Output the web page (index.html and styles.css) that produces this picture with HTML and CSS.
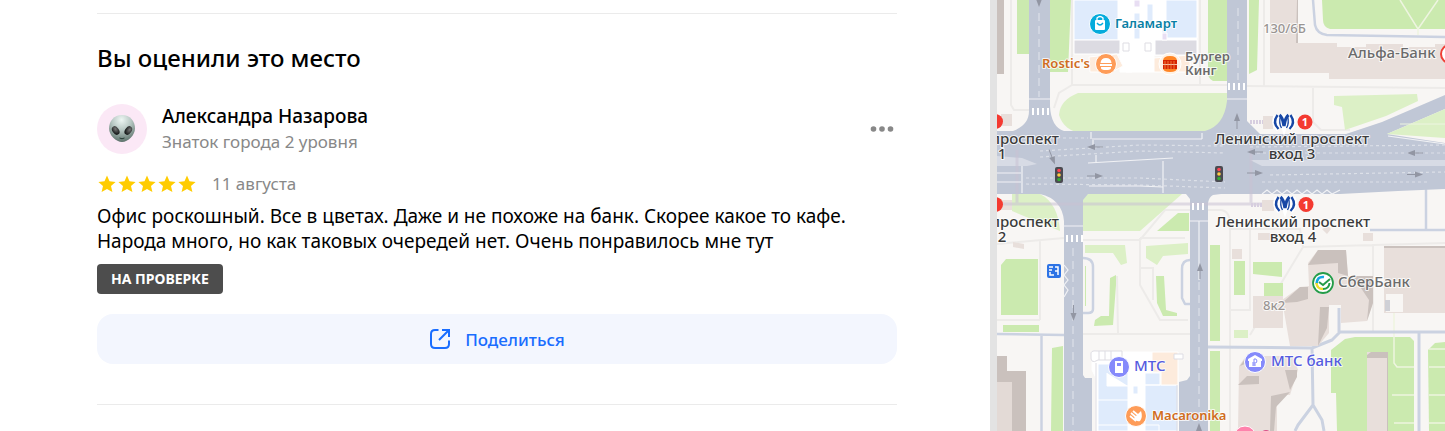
FILE: index.html
```html
<!DOCTYPE html>
<html lang="ru">
<head>
<meta charset="utf-8">
<title>Отзыв</title>
<link rel="stylesheet" href="styles.css">
</head>
<body>
<div class="page">
<main class="panel">
  <section class="review-block">
    <h2 class="title">Вы оценили это место</h2>
    <article class="review">
      <header class="author">
        <svg class="avatar" viewBox="0 0 50 50" aria-hidden="true">
          <defs>
            <radialGradient id="skin" cx=".48" cy=".18" r=".9"><stop offset="0" stop-color="#eef7f4"/><stop offset=".4" stop-color="#b9c9c5"/><stop offset=".8" stop-color="#71857f"/><stop offset="1" stop-color="#4b625b"/></radialGradient>
            <radialGradient id="eye" cx=".6" cy=".35" r=".6"><stop offset="0" stop-color="#777"/><stop offset="1" stop-color="#191c1c"/></radialGradient>
          </defs>
          <circle cx="25" cy="25" r="25" fill="#fbe8f6"/>
          <path d="M25 11C17 11 12 17 12 24.500C12 31 19 38 25 38S38 31 38 24.500C38 17 33 11 25 11Z" fill="url(#skin)"/>
          <ellipse cx="18.700" cy="26.500" rx="3.200" ry="4.700" transform="rotate(-35 18.700 26.500)" fill="url(#eye)"/>
          <ellipse cx="31.300" cy="26.500" rx="3.200" ry="4.700" transform="rotate(35 31.300 26.500)" fill="url(#eye)"/>
          <path d="M22.500 34Q25 35.500 27.500 34" fill="none" stroke="#263a34" stroke-width="1"/>
        </svg>
        <div class="who">
          <div class="name">Александра Назарова</div>
          <div class="level">Знаток города 2 уровня</div>
        </div>
        <button class="more" type="button" aria-label="Ещё">
          <svg width="24" height="8" viewBox="0 0 24 8" fill="#888"><circle cx="3.500" cy="4" r="2.800"/><circle cx="12" cy="4" r="2.800"/><circle cx="20.500" cy="4" r="2.800"/></svg>
        </button>
      </header>
      <div class="rating">
        <svg class="stars" width="100" height="20" viewBox="0 0 100 20" fill="#fc0" role="img" aria-label="5 из 5">
          <defs><path id="star" d="M10 1.500L12.500 7.300L18.600 7.900L14 12L15.400 18L10 14.900L4.600 18L6 12L1.400 7.900L7.500 7.300Z"/></defs>
          <use href="#star"/><use href="#star" x="20"/><use href="#star" x="40"/><use href="#star" x="60"/><use href="#star" x="80"/>
        </svg>
        <span class="date">11 августа</span>
      </div>
      <p class="text">Офис роскошный. Все в цветах. Даже и не похоже на банк. Скорее какое то кафе.<br>Народа много, но как таковых очередей нет. Очень понравилось мне тут</p>
      <span class="badge">НА ПРОВЕРКЕ</span>
      <button class="share" type="button">
        <svg width="22" height="22" viewBox="0 0 22 22" fill="none" stroke="#196dff" stroke-width="2"><path d="M9.500 2H6Q2 2 2 6V16Q2 20 6 20H16Q20 20 20 16V12.500M10 12L19 3"/><path d="M13 2H20V9" /></svg>
        <span>Поделиться</span>
      </button>
    </article>
  </section>
</main>
<div class="gutter"></div>
<aside class="map">
<svg class="canvas" viewBox="997 0 448 431" preserveAspectRatio="xMinYMin slice" role="img" aria-label="Карта">
  <rect x="997" width="448" height="431" fill="#f8f6f4"/>
  <g fill="none" stroke="#edebe9" stroke-width="2">
    <path d="M1011 0V105L1014 110H1029M1072 0V85L1059 93L1054 108M1072 85H1227M1200 0V85M1247 86L1445 88M1264 0V86M1313 88V122L1321 130H1350"/>
    <path d="M1040 241V320M997 244L1064 238M997 320H1040M1083 334L1190 334M1083 240H1140L1165 210H1220Q1230 210 1230 225V431M1140 238H1185M1140 238V285L1160 320H1188M1117 276L1118 334M1140 268H1153V300M1230 229H1300L1303 247L1445 243M1303 247L1250 335M1373 244V333M1250 229V311M1230 310H1250"/>
  </g>
  <g fill="#dcf0c6">
    <path d="M1078 93H1227V111Q1226 127 1206 133H1082Q1064 131 1059 115Q1060 100 1078 93Z"/>
    <path d="M1334 96L1417 94L1418 101L1386 116L1345 130L1342 107L1334 105Z"/>
    <path d="M1012 194H1040Q1058 203 1060 231L1012 211Z"/>
    <path d="M1083 199Q1083 194 1089 194H1182L1140 231H1083Z"/>
    <path d="M1085 245H1125L1127 263L1121 265L1113 253H1085Z"/>
    <path d="M1146 246L1188 243V254L1163 256L1157 265L1146 258Z"/>
    <path d="M1234 330H1248V338H1234Z"/>
  </g>
  <g fill="#cbeaaf">
    <path d="M1017 0H1029V54H1017ZM1050 0H1071L1068 72H1050ZM1208 0H1227V81H1213Q1207 78 1208 70ZM1249 0H1259L1257 70L1249 74Z"/>
    <path d="M1322 0H1445V29H1330Q1323 27 1323 20Z"/>
    <path d="M1157 231L1178 213H1189V231Z"/>
    <path d="M1001 265L1006 259H1038V315H1001ZM1003 325H1039V332H1003ZM1052 348L1063 346V431H1051Z"/>
    <path d="M1110 278L1116 275V285L1113 325L1094 326L1095 320L1101 316H1109Z"/>
    <path d="M1156 276H1164L1166 310L1177 313V316H1163L1157 303Z"/>
    <path d="M1210 245H1220V341H1210ZM1210 351H1220V431H1210ZM1234 261H1245V295H1234ZM1253 262H1282V277L1253 274ZM1264 283H1283V296H1264ZM1085 266H1086V306H1085Z"/>
    <path d="M1331 350L1345 339L1355 337H1410L1414 341V431H1337L1336 393H1331Z"/>
    <path d="M1428 350L1435 343L1445 342V431H1429Z"/>
  </g>
  <g fill="none" stroke="#eef5e0" stroke-width="1.500"><path d="M1400 0L1418 29V35M1418 29L1438 0M1394 304V363L1397 367H1414M1392 395H1414M1394 423H1414M1429 349H1445M1429 367H1445M1429 395H1445M1429 423H1445"/></g>
  <g fill="none" stroke="#cbd2e1" stroke-width="3" stroke-linejoin="round">
    <path d="M1313 0L1315 25Q1317 34 1327 35L1445 37" stroke-width="2.500"/>
    <path d="M1370 230H1445M1426 189V230" stroke-width="2.500"/>
    <path d="M997 334L1064 335M1041.500 335V431M1083 258Q1093 258 1093 267V309Q1093 313 1088 313H1083M1190 260Q1182 260 1182 269V298L1185 304H1190" stroke-width="2.500"/>
    <path d="M1208 347L1312 348L1332 340L1340 332H1445M1339 308V332M1312 348L1313 405L1298 425L1295 431M1313 405L1322 420L1324 431M1419 332V431"/>
  </g>
  <g fill="#e8dfdb">
    <path d="M1270 0H1297V43H1337V47H1366V44H1403V47H1435V44H1445V79H1329V73H1270Z"/>
    <path d="M1001 114H1012V126H1001ZM1001 200H1012V210H1001ZM1263 116H1273V129H1263ZM1262 200H1274V211H1262ZM1013 242L1024 244V249L1013 247ZM1258 233H1270V240H1258ZM1232 249H1242V259H1232ZM1363 233H1373V241H1363ZM1322 229L1328 226L1331 229L1327 234Z"/>
    <path d="M1253 296H1283V328H1253Z"/>
    <path d="M1282 300L1300 287L1309 286L1308 263L1318 250H1346L1348 276H1373V303L1367 321L1341 323V305H1329V333L1318 346H1290Z"/>
    <path d="M1384 246H1445V313H1384Z"/>
    <path d="M1239 366L1246 356H1293L1298 370L1290 395H1277V431H1238Z"/>
    <path d="M1367 352H1388V431H1367Z"/>
  </g>
  <g fill="#cac1bd">
    <path d="M997 0H1004V74H997ZM1297 0H1298V43H1296ZM1384 246H1445V248H1384Z"/>
    <path d="M997 356H1007V371H1026V431H997Z"/>
    <path d="M1308 265L1318 250H1346L1348 276L1338 273V263ZM1282 303L1300 287H1308V299L1297 302ZM1320 307H1329L1327 328L1318 346ZM1353 276H1373V303L1367 321L1369 300Z"/>
    <path d="M1240 366L1247 356H1263V362H1250ZM1238 385L1247 376H1259V384ZM1271 396L1290 392L1276 407L1274 431H1270ZM1367 355L1371 352H1388V431H1387V358H1367ZM1285 370L1297 370V377L1290 390Z"/>
  </g>
  <path d="M997 382H1012V431H997Z" fill="#e3dad6"/>
  <path d="M1386 294H1403V312H1386Z" fill="#f8f6f4"/><path d="M1385 300H1390V311H1385Z" fill="#cfd0d6"/>

  <g fill="#dfebfc" stroke="#fff" stroke-width="1">
    <path d="M1117 0H1197V55H1117Z" fill="#fff"/>
    <path d="M1074 0H1118V40H1074ZM1166 0H1197V38H1162V21H1166ZM1147 4H1153V23H1147ZM1134 13H1140V39H1134Z"/>
    <path d="M1074 40H1120V54H1074ZM1155 40H1197V55H1155Z" fill="#dcdbe2"/>
    <path d="M1134 0H1140V7H1134ZM1126 67H1132V72H1126ZM1162 33H1167V40H1162Z" fill="#e8def3"/>
    <path d="M1120 50H1154V72H1120Z" fill="#fff"/>
    <path d="M1089 57L1117 54L1123 66L1112 72H1090ZM1154 58L1190 55V72H1154Z" fill="#fdebdc"/>
    <path d="M1092 352H1152V431H1096V378L1092 370Z" fill="#fff"/>
    <path d="M1098 364H1128V431H1098ZM1098 400H1128M1098 425H1128M1107 373V386H1128M1145 385H1178V431H1145ZM1145 373H1160V385H1145ZM1145 425H1159V431M1133 386H1138V394H1133Z"/>
    <path d="M1152 352H1178V385H1161V372H1152Z" fill="#fdebdc"/>
  </g>
  <g fill="#fff" stroke="#dedde3" stroke-width="1"><path d="M1123 43H1129V51H1123ZM1145 43H1151V51H1145ZM1091 355Q1090 350 1097 351H1122V360H1098Q1090 365 1091 355ZM1174 354H1183V359H1174ZM1099 351V360M1105 351V360M1111 351V360M1177 385V431M1096 363V431" /></g>

  <g fill="#c0c7d6">
    <path d="M1029 0H1050V106Q1051 127 1064 131H1205Q1224 126 1227 101V0H1247V121L1260 134H1346L1382 122L1445 95V109L1387 134L1445 143V189L1398 191L1340 194H1221L1213 195Q1209 197 1208 203V431H1179V382L1187 380L1190 376V199L1186 194H1088L1083 200V375L1085 378H1092V431H1064V221Q1062 199 1040 194H997V131H1013Q1029 125 1029 111Z"/>
  </g>
  <path d="M1387 134L1445 109V138Z" fill="#dcf0c6"/><path d="M1400 124H1445" stroke="#edf5e1"/>
  <path d="M1250 160H1445V166H1262Z" fill="#d7dbe5"/>
  <path d="M997 156L1022 158L1037 164L1027 166H997Z" fill="#d7dbe5"/>
  <path d="M1017 150V203M1003 204H1262M1251 133V204" fill="none" stroke="#c9c1d4" stroke-width="3" opacity=".55"/>
  <g fill="none" stroke="#dce0e8" stroke-width="1.200">
    <path d="M1039 13V97M1238 8V80M1073 248V431M1199 282V431" stroke-dasharray="8 5"/>
    <path d="M1040 151L1140 145L1225 146M1040 157L1140 151L1225 153M1026 178L1140 178L1225 182M1026 184L1140 185L1225 188M1063 138H1088M1250 147L1445 145M1251 153H1445M1270 175L1445 172M1262 182H1430" stroke-dasharray="3 3"/>
    <path d="M1029 99H1050M1091 132V139M1092 139H1202M1202 139V133M1022 166V193M997 173H1021M997 182H1021M1088 163L1173 158M1089 186H1140L1163 187M1163 161V193M1227 99H1247M1063 226H1083M1190 221H1208M1199 221V280M1093 140V146M1096 155V162M1262 194L1267 190L1272 194L1277 190L1282 194L1287 190L1292 194L1297 190L1302 194L1307 190L1312 194L1317 190L1322 194L1327 190L1332 194L1340 190M1388 136L1445 144M1064 265L1068 270L1064 275L1068 280L1064 285L1068 290L1064 297" stroke="#f1f2f5"/>
  </g>
  <g stroke="#fff" stroke-width="2"><path d="M1033 108V115M1038 108V115M1043 108V115M1048 108V115M1229 83V90M1234 83V90M1239 83V90M1244 83V90M1067 235V242M1072 235V242M1077 235V242M1082 235V242M1193 203V210M1198 203V210M1203 203V210"/></g>
  <path d="M1250 122H1263M1251 205H1262" stroke="#d7cedf" stroke-width="4" stroke-dasharray="2 1"/>

  <defs><g id="arrow"><path d="M-8 0H1" stroke="#9296a3" stroke-width="1"/><path d="M0 -3L8 0L0 3Z" fill="#9296a3"/></g>
    <g id="light"><rect x="-4" y="-8" width="8" height="16" rx="2" fill="#4b4b51"/><circle cy="-4.500" r="1.800" fill="#f45"/><circle r="1.800" fill="#fc4"/><circle cy="4.500" r="1.800" fill="#3a3"/></g>
    <g id="metro" fill="none"><path d="M-5 7Q-11 2 -7.500 -6M5 7Q11 2 7.500 -6M-3.500 -7L0 4L3.500 -7" stroke="#fff" stroke-width="6"/><path d="M-5.500 7Q-12 1 -6.500 -7M5.500 7Q12 1 6.500 -7" stroke="#1747a5" stroke-width="2.300"/><path d="M-4.500 -7Q-1.500 -5 0 4Q1.500 -5 4.500 -7" stroke="#1747a5" stroke-width="3.200"/><path d="M-3.500 -6Q-5.500 1 -2.500 6M3.500 -6Q5.500 1 2.500 6" stroke="#1747a5" stroke-width="1.300"/></g>
  </defs>
  <use href="#arrow" transform="translate(1095 176)"/><use href="#arrow" transform="translate(1255 173)"/><use href="#arrow" transform="translate(1415 174.500)"/>
  <use href="#arrow" transform="translate(1095 147) rotate(180)"/><use href="#arrow" transform="translate(1255 152) rotate(180)"/><use href="#arrow" transform="translate(1415 153) rotate(180)"/>
  <use href="#arrow" transform="translate(1237 121) rotate(-90)"/><use href="#arrow" transform="translate(1200 271) rotate(-90)"/><use href="#arrow" transform="translate(1199 431) rotate(-90)"/><use href="#arrow" transform="translate(1073.500 313) rotate(90)"/><use href="#arrow" transform="translate(1039 -1) rotate(90)"/><use href="#arrow" transform="translate(1052 157) rotate(68)"/>
  <use href="#light" transform="translate(1059 175)"/><use href="#light" transform="translate(1219 174)"/>
  <use href="#metro" transform="translate(1284 122)"/><use href="#metro" transform="translate(1285 204)"/>

  <g fill="#f43a31"><circle cx="995.500" cy="121.500" r="7.500"/><circle cx="995.500" cy="204.500" r="7.500"/><circle cx="1305" cy="122" r="7.500"/><circle cx="1306" cy="204.500" r="7.500"/></g>
  <text class="line-number" x="1305" y="126">1</text><text class="line-number" x="1306" y="209">1</text>

  <g stroke="#fff" stroke-width="1">
    <circle cx="1100" cy="24" r="10.500" fill="#05abdc"/><circle cx="1106" cy="64" r="10.500" fill="#fe9c58"/><circle cx="1119" cy="367" r="10.500" fill="#858afb"/><circle cx="1136" cy="416" r="10.500" fill="#fe9c58"/><circle cx="1255" cy="362" r="10.500" fill="#858afb"/><circle cx="1245" cy="437" r="11" fill="#ff82ac"/><circle cx="1170" cy="64" r="11" fill="#fff1e3"/>
  </g>
  <rect x="1095" y="20" width="10" height="10" rx="1" fill="#fff"/><path d="M1097 20V18Q1100 15 1103 18V20" fill="none" stroke="#fff" stroke-width="1.300"/><path d="M1097 23Q1100 27 1103 23" fill="none" stroke="#05abdc" stroke-width="1.300"/>
  <path d="M1100.500 63Q1101 58 1106 58T1111.500 63ZM1100 64H1112V66H1100ZM1101 67H1111V68Q1111 70 1106 70T1101 68Z" fill="#fff"/>
  <path d="M1163 61Q1163 56 1170 56T1177 61ZM1163 68H1177Q1177 72 1170 72T1163 68Z" fill="#ff8525"/><path d="M1163 60H1177V64H1163ZM1163 64.700H1177V69H1163Z" fill="#d62300"/><path d="M1165 61V69M1168 61V69M1171 61V69M1174 61V69" stroke="#f9a04f" stroke-width=".7"/>
  <rect x="1047" y="264" width="14" height="14" rx="2" fill="#2d73e5"/><path d="M1049 267H1053M1049 270H1052M1050 272V275H1054M1055 267H1058V275M1055 271H1058" fill="none" stroke="#fff" stroke-width="1.500"/>
  <path d="M1115 361H1123V373H1115Z" fill="#fff"/><path d="M1117 363H1121V366H1117Z" fill="#858afb"/>
  <path d="M1131 413L1138 419M1130 416L1136 421M1133 411L1139 416" stroke="#fff" stroke-width="1.700"/><path d="M1134 418L1141 411Q1143 417 1140 421Q1136 422 1134 418Z" fill="#fff"/>
  <path d="M1248 359L1255 355L1262 359V361H1261V367H1249V361H1248Z" fill="#fff"/><path d="M1254 366V359H1256Q1258 361 1256 363H1252M1252 365H1256" fill="none" stroke="#858afb" stroke-width="1"/>
  <circle cx="1323" cy="283" r="11" fill="#fff"/><circle cx="1323" cy="283" r="10" fill="none" stroke="#259b48" stroke-width="1.800"/><path d="M1316.500 284Q1317 276 1324 277" fill="none" stroke="#14a7e2" stroke-width="2.500"/><path d="M1316.500 283Q1317 289 1323 289" fill="none" stroke="#f1dd2b" stroke-width="2.500"/><path d="M1319 282L1323 285L1330 279M1323 289Q1329 289 1329.500 283" fill="none" stroke="#259b48" stroke-width="2"/>
  <circle cx="1450" cy="54" r="9" fill="#fff" stroke="#ef3f35" stroke-width="2"/>
  <circle cx="1266" cy="436" r="6" fill="#d84f88"/>

  <g class="label">
    <g fill="#087fa5"><text x="1115" y="28">Галамарт</text></g>
    <g fill="#d06c20"><text x="1042" y="68">Rostic's</text><text x="1152" y="420">Macaronika</text></g>
    <g fill="#555ce0"><text class="large" x="1134" y="371">МТС</text><text class="large" x="1271" y="366">МТС банк</text></g>
    <g fill="#6b6b6b"><text x="1185" y="61">Бургер</text><text x="1185" y="75">Кинг</text><text class="large" x="1348" y="58">Альфа-Банк</text><text class="large" x="1338" y="287">СберБанк</text></g>
    <g fill="#999492" class="house"><text x="1263" y="33">130/6Б</text><text x="1263" y="310">8к2</text></g>
    <g class="station"><text x="1292" y="144">Ленинский проспект</text><text x="1292" y="159">вход 3</text><text x="1293" y="227">Ленинский проспект</text><text x="1293" y="242">вход 4</text>
    <text class="end" x="1059" y="144">проспект</text><text x="1002" y="159">1</text><text class="end" x="1059" y="227">проспект</text><text x="1002" y="242">2</text></g>
  </g>
</svg>
</aside>
</div>
</body>
</html>
```
FILE: styles.css
```css
* { box-sizing: border-box; }
body { margin: 0; background: #fff; color: #000; font-family: "Noto Sans", "Open Sans", sans-serif; }
button { border: 0; font: inherit; cursor: pointer; }
.page { display: grid; grid-template-columns: minmax(0, 990fr) 7px minmax(0, 448fr); min-height: 100vh; }
.panel { padding: 13px 93px 26px 97px; }
.review-block { border-top: 1px solid #ebebeb; border-bottom: 1px solid #ebebeb; padding: 28px 0 40px; }
.title { margin: 0 0 30px; font-size: 24px; line-height: 32px; font-weight: 500; }
.review { display: flex; flex-direction: column; align-items: stretch; }
.author { display: flex; align-items: center; gap: 15px; }
.avatar { width: 50px; height: 50px; flex: none; }
.who { flex: 1; min-width: 0; line-height: 25px; }
.name { font-size: 19px; font-weight: 500; }
.level { font-size: 17px; color: #888; }
.more { display: flex; padding: 8px 3px; background: none; }
.rating { display: flex; align-items: center; gap: 15px; height: 25px; margin-top: 17px; }
.date { font-size: 17px; color: #888; }
.text { margin: 8px 0 10px; font-size: 19px; line-height: 25px; }
.badge { align-self: flex-start; padding: 0 14px; border-radius: 4px; background: #4d4d4d; color: #fff; font-size: 14px; line-height: 30px; font-weight: 700; }
.share { display: flex; align-items: center; justify-content: center; gap: 14px; height: 50px; margin-top: 20px; border-radius: 16px; background: #f3f6fe; color: #196dff; font-size: 17px; font-weight: 500; }
.gutter { background: #e3e3e3; }
.map { position: relative; overflow: hidden; background: #f8f6f4; }
.canvas { position: absolute; inset: 0; width: 100%; height: 100%; display: block; }
.label { font-size: 13px; font-weight: 600; stroke: rgba(255, 255, 255, 0.8); stroke-width: 2px; stroke-linejoin: round; paint-order: stroke; }
.label .large { font-size: 15px; font-weight: 500; }
.label .house { font-weight: 500; }
.station { fill: #3b3b3b; font-size: 15px; font-weight: 500; text-anchor: middle; }
.station .end { text-anchor: end; }
.line-number { fill: #fff; font-size: 11px; font-weight: 700; text-anchor: middle; }
```
